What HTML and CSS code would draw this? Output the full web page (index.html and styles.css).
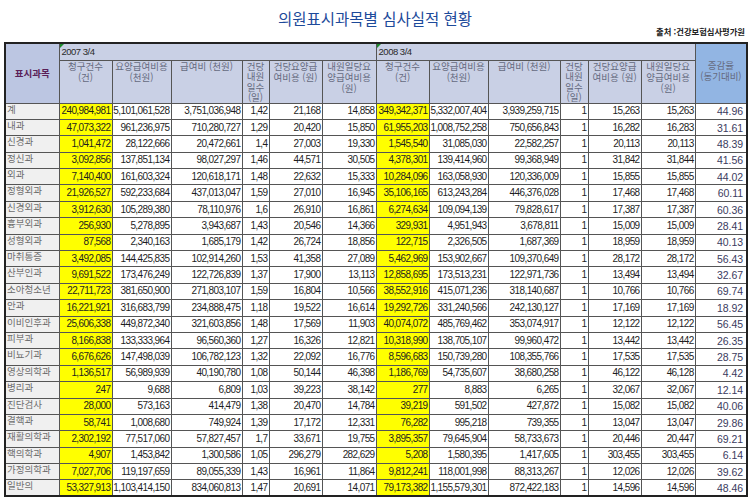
FILE: index.html
```html
<!DOCTYPE html>
<html lang="ko">
<head>
<meta charset="utf-8">
<title>의원표시과목별 심사실적 현황</title>
<link rel="stylesheet" href="styles.css">
</head>
<body>
<div class="page">
  <h1 class="title">의원표시과목별 심사실적 현황</h1>
  <p class="source">출처 :건강보험심사평가원</p>
  <table class="stats">
    <colgroup>
      <col class="w-name"><col class="w-cnt"><col class="w-cost"><col class="w-pay"><col class="w-day"><col class="w-per"><col class="w-perday">
      <col class="w-cnt"><col class="w-cost"><col class="w-pay2"><col class="w-day2"><col class="w-per2"><col class="w-perday"><col class="w-rate">
    </colgroup>
    <thead>
      <tr class="r-year">
        <th rowspan="2" class="h-name">표시과목</th>
        <th colspan="6" class="h-year">2007 3/4</th>
        <th colspan="6" class="h-year">2008 3/4</th>
        <th rowspan="2" class="h-rate">증감율<br>(동기대비)</th>
      </tr>
      <tr class="r-head">
        <th>청구건수<br>(건)</th>
        <th>요양급여비용<br>(천원)</th>
        <th>급여비 (천원)</th>
        <th class="h-tight">건당<br>내원<br>일수<br>(일)</th>
        <th>건당요양급<br>여비용 (원)</th>
        <th>내원일당요<br>양급여비용<br>(원)</th>
        <th>청구건수<br>(건)</th>
        <th>요양급여비용<br>(천원)</th>
        <th>급여비 (천원)</th>
        <th class="h-tight">건당<br>내원<br>일수<br>(일)</th>
        <th>건당요양급<br>여비용 (원)</th>
        <th>내원일당요<br>양급여비용<br>(원)</th>
      </tr>
    </thead>
    <tbody>
      <tr><td class="lbl">계</td><td class="hl">240,984,981</td><td>5,101,061,528</td><td>3,751,036,948</td><td>1,42</td><td>21,168</td><td>14,858</td><td class="hl">349,342,371</td><td>5,332,007,404</td><td>3,939,259,715</td><td>1</td><td>15,263</td><td>15,263</td><td class="rate">44.96</td></tr>
      <tr><td class="lbl">내과</td><td class="hl">47,073,322</td><td>961,236,975</td><td>710,280,727</td><td>1,29</td><td>20,420</td><td>15,850</td><td class="hl">61,955,203</td><td>1,008,752,258</td><td>750,656,843</td><td>1</td><td>16,282</td><td>16,283</td><td class="rate">31.61</td></tr>
      <tr><td class="lbl">신경과</td><td class="hl">1,041,472</td><td>28,122,666</td><td>20,472,661</td><td>1,4</td><td>27,003</td><td>19,330</td><td class="hl">1,545,540</td><td>31,085,030</td><td>22,582,257</td><td>1</td><td>20,113</td><td>20,113</td><td class="rate">48.39</td></tr>
      <tr><td class="lbl">정신과</td><td class="hl">3,092,856</td><td>137,851,134</td><td>98,027,297</td><td>1,46</td><td>44,571</td><td>30,505</td><td class="hl">4,378,301</td><td>139,414,960</td><td>99,368,949</td><td>1</td><td>31,842</td><td>31,844</td><td class="rate">41.56</td></tr>
      <tr><td class="lbl">외과</td><td class="hl">7,140,400</td><td>161,603,324</td><td>120,618,171</td><td>1,48</td><td>22,632</td><td>15,333</td><td class="hl">10,284,096</td><td>163,058,930</td><td>120,336,009</td><td>1</td><td>15,855</td><td>15,855</td><td class="rate">44.02</td></tr>
      <tr><td class="lbl">정형외과</td><td class="hl">21,926,527</td><td>592,233,684</td><td>437,013,047</td><td>1,59</td><td>27,010</td><td>16,945</td><td class="hl">35,106,165</td><td>613,243,284</td><td>446,376,028</td><td>1</td><td>17,468</td><td>17,468</td><td class="rate">60.11</td></tr>
      <tr><td class="lbl">신경외과</td><td class="hl">3,912,630</td><td>105,289,380</td><td>78,110,976</td><td>1,6</td><td>26,910</td><td>16,861</td><td class="hl">6,274,634</td><td>109,094,139</td><td>79,828,617</td><td>1</td><td>17,387</td><td>17,387</td><td class="rate">60.36</td></tr>
      <tr><td class="lbl">흉부외과</td><td class="hl">256,930</td><td>5,278,895</td><td>3,943,687</td><td>1,43</td><td>20,546</td><td>14,366</td><td class="hl">329,931</td><td>4,951,943</td><td>3,678,811</td><td>1</td><td>15,009</td><td>15,009</td><td class="rate">28.41</td></tr>
      <tr><td class="lbl">성형외과</td><td class="hl">87,568</td><td>2,340,163</td><td>1,685,179</td><td>1,42</td><td>26,724</td><td>18,856</td><td class="hl">122,715</td><td>2,326,505</td><td>1,687,369</td><td>1</td><td>18,959</td><td>18,959</td><td class="rate">40.13</td></tr>
      <tr><td class="lbl">마취통증</td><td class="hl">3,492,085</td><td>144,425,835</td><td>102,914,260</td><td>1,53</td><td>41,358</td><td>27,089</td><td class="hl">5,462,969</td><td>153,902,667</td><td>109,370,649</td><td>1</td><td>28,172</td><td>28,172</td><td class="rate">56.43</td></tr>
      <tr><td class="lbl">산부인과</td><td class="hl">9,691,522</td><td>173,476,249</td><td>122,726,839</td><td>1,37</td><td>17,900</td><td>13,113</td><td class="hl">12,858,695</td><td>173,513,231</td><td>122,971,736</td><td>1</td><td>13,494</td><td>13,494</td><td class="rate">32.67</td></tr>
      <tr><td class="lbl">소아청소년</td><td class="hl">22,711,723</td><td>381,650,900</td><td>271,803,107</td><td>1,59</td><td>16,804</td><td>10,566</td><td class="hl">38,552,916</td><td>415,071,236</td><td>318,140,687</td><td>1</td><td>10,766</td><td>10,766</td><td class="rate">69.74</td></tr>
      <tr><td class="lbl">안과</td><td class="hl">16,221,921</td><td>316,683,799</td><td>234,888,475</td><td>1,18</td><td>19,522</td><td>16,614</td><td class="hl">19,292,726</td><td>331,240,566</td><td>242,130,127</td><td>1</td><td>17,169</td><td>17,169</td><td class="rate">18.92</td></tr>
      <tr><td class="lbl">이비인후과</td><td class="hl">25,606,338</td><td>449,872,340</td><td>321,603,856</td><td>1,48</td><td>17,569</td><td>11,903</td><td class="hl">40,074,072</td><td>485,769,462</td><td>353,074,917</td><td>1</td><td>12,122</td><td>12,122</td><td class="rate">56.45</td></tr>
      <tr><td class="lbl">피부과</td><td class="hl">8,166,838</td><td>133,333,964</td><td>96,560,360</td><td>1,27</td><td>16,326</td><td>12,821</td><td class="hl">10,318,990</td><td>138,705,107</td><td>99,960,472</td><td>1</td><td>13,442</td><td>13,442</td><td class="rate">26.35</td></tr>
      <tr><td class="lbl">비뇨기과</td><td class="hl">6,676,626</td><td>147,498,039</td><td>106,782,123</td><td>1,32</td><td>22,092</td><td>16,776</td><td class="hl">8,596,683</td><td>150,739,280</td><td>108,355,766</td><td>1</td><td>17,535</td><td>17,535</td><td class="rate">28.75</td></tr>
      <tr><td class="lbl">영상의학과</td><td class="hl">1,136,517</td><td>56,989,939</td><td>40,190,780</td><td>1,08</td><td>50,144</td><td>46,398</td><td class="hl">1,186,769</td><td>54,735,607</td><td>38,680,258</td><td>1</td><td>46,122</td><td>46,128</td><td class="rate">4.42</td></tr>
      <tr><td class="lbl">병리과</td><td class="hl">247</td><td>9,688</td><td>6,809</td><td>1,03</td><td>39,223</td><td>38,142</td><td class="hl">277</td><td>8,883</td><td>6,265</td><td>1</td><td>32,067</td><td>32,067</td><td class="rate">12.14</td></tr>
      <tr><td class="lbl">진단검사</td><td class="hl">28,000</td><td>573,163</td><td>414,479</td><td>1,38</td><td>20,470</td><td>14,784</td><td class="hl">39,219</td><td>591,502</td><td>427,872</td><td>1</td><td>15,082</td><td>15,082</td><td class="rate">40.06</td></tr>
      <tr><td class="lbl">결핵과</td><td class="hl">58,741</td><td>1,008,680</td><td>749,924</td><td>1,39</td><td>17,172</td><td>12,331</td><td class="hl">76,282</td><td>995,218</td><td>739,355</td><td>1</td><td>13,047</td><td>13,047</td><td class="rate">29.86</td></tr>
      <tr><td class="lbl">재활의학과</td><td class="hl">2,302,192</td><td>77,517,060</td><td>57,827,457</td><td>1,7</td><td>33,671</td><td>19,755</td><td class="hl">3,895,357</td><td>79,645,904</td><td>58,733,673</td><td>1</td><td>20,446</td><td>20,447</td><td class="rate">69.21</td></tr>
      <tr><td class="lbl">핵의학과</td><td class="hl">4,907</td><td>1,453,842</td><td>1,300,586</td><td>1,05</td><td>296,279</td><td>282,629</td><td class="hl">5,208</td><td>1,580,395</td><td>1,417,605</td><td>1</td><td>303,455</td><td>303,455</td><td class="rate">6.14</td></tr>
      <tr><td class="lbl">가정의학과</td><td class="hl">7,027,706</td><td>119,197,659</td><td>89,055,339</td><td>1,43</td><td>16,961</td><td>11,864</td><td class="hl">9,812,241</td><td>118,001,998</td><td>88,313,267</td><td>1</td><td>12,026</td><td>12,026</td><td class="rate">39.62</td></tr>
      <tr><td class="lbl">일반의</td><td class="hl">53,327,913</td><td>1,103,414,150</td><td>834,060,813</td><td>1,47</td><td>20,691</td><td>14,071</td><td class="hl">79,173,382</td><td>1,155,579,301</td><td>872,422,183</td><td>1</td><td>14,596</td><td>14,596</td><td class="rate">48.46</td></tr>
    </tbody>
  </table>
</div>
</body>
</html>
```
FILE: styles.css
```css
html, body {
  margin: 0;
  padding: 0;
  background: #ffffff;
}

body {
  font-family: "Noto Sans CJK KR", "Noto Sans", sans-serif;
  color: #222222;
}

.page {
  width: 750px;
}

.title {
  margin: 0;
  padding-top: 9px;
  height: 18px;
  line-height: 18px;
  text-align: center;
  font-size: 15.5px;
  font-weight: normal;
  letter-spacing: 0;
  color: #1d4a9a;
}

.source {
  margin: 0;
  padding-right: 5px;
  height: 9px;
  line-height: 9px;
  text-align: right;
  font-size: 8.3px;
  font-weight: bold;
  color: #222222;
}

.stats {
  margin: 6px 0 0 4px;
  width: 743px;
  table-layout: fixed;
  border-collapse: collapse;
  border: 2px solid #222222;
}

.w-name { width: 54px; }
.w-cnt { width: 53px; }
.w-cost { width: 59px; }
.w-pay { width: 71px; }
.w-day { width: 27px; }
.w-per { width: 53px; }
.w-perday { width: 54px; }
.w-pay2 { width: 72px; }
.w-day2 { width: 28px; }
.w-per2 { width: 53px; }
.w-rate { width: 52px; }

.stats th,
.stats td {
  border: 1px solid #555555;
  padding: 0;
  overflow: hidden;
  white-space: nowrap;
}

.stats th {
  background: #c9d0e5;
  color: #656a7e;
  font-weight: normal;
  font-size: 9.5px;
  line-height: 11px;
  vertical-align: top;
  text-align: center;
}

.stats th.h-tight {
  line-height: 10.5px;
}

.r-year {
  height: 17px;
}

.r-head {
  height: 43px;
}

.stats .h-name {
  background: #bcc6e2;
  color: #5a1f58;
  font-weight: bold;
  vertical-align: middle;
  font-size: 9.5px;
}

.stats .h-year {
  position: relative;
  text-align: left;
  vertical-align: middle;
  padding-left: 2px;
  font-family: "Liberation Sans", Arial, sans-serif;
  font-size: 9.5px;
  letter-spacing: -0.5px;
  color: #2a2a2a;
}

.stats .h-year::before {
  content: "";
  position: absolute;
  left: 0;
  top: 0;
  border-top: 4px solid #1d8a2c;
  border-right: 4px solid transparent;
}

.stats .h-rate {
  background: #92b5e3;
  vertical-align: middle;
  padding-bottom: 4px;
}

.stats tbody tr {
  height: 16.4px;
}

.stats td {
  background: #ffffff;
  font-family: "Liberation Sans", Arial, sans-serif;
  font-size: 10px;
  line-height: 12px;
  letter-spacing: -0.6px;
  text-align: right;
  vertical-align: middle;
  padding-right: 1px;
  color: #1e1e1e;
}

.stats td.lbl {
  background: #f0f0f0;
  font-family: "Noto Sans CJK KR", sans-serif;
  font-size: 9.5px;
  line-height: 11px;
  letter-spacing: 0;
  text-align: left;
  vertical-align: top;
  padding: 0 0 0 1px;
  color: #6d6d6d;
}

.stats td.hl {
  background: #ffff00;
}

.stats td.rate {
  font-size: 10.5px;
  letter-spacing: 0;
  padding-right: 3px;
  color: #3b3b5e;
}
```
